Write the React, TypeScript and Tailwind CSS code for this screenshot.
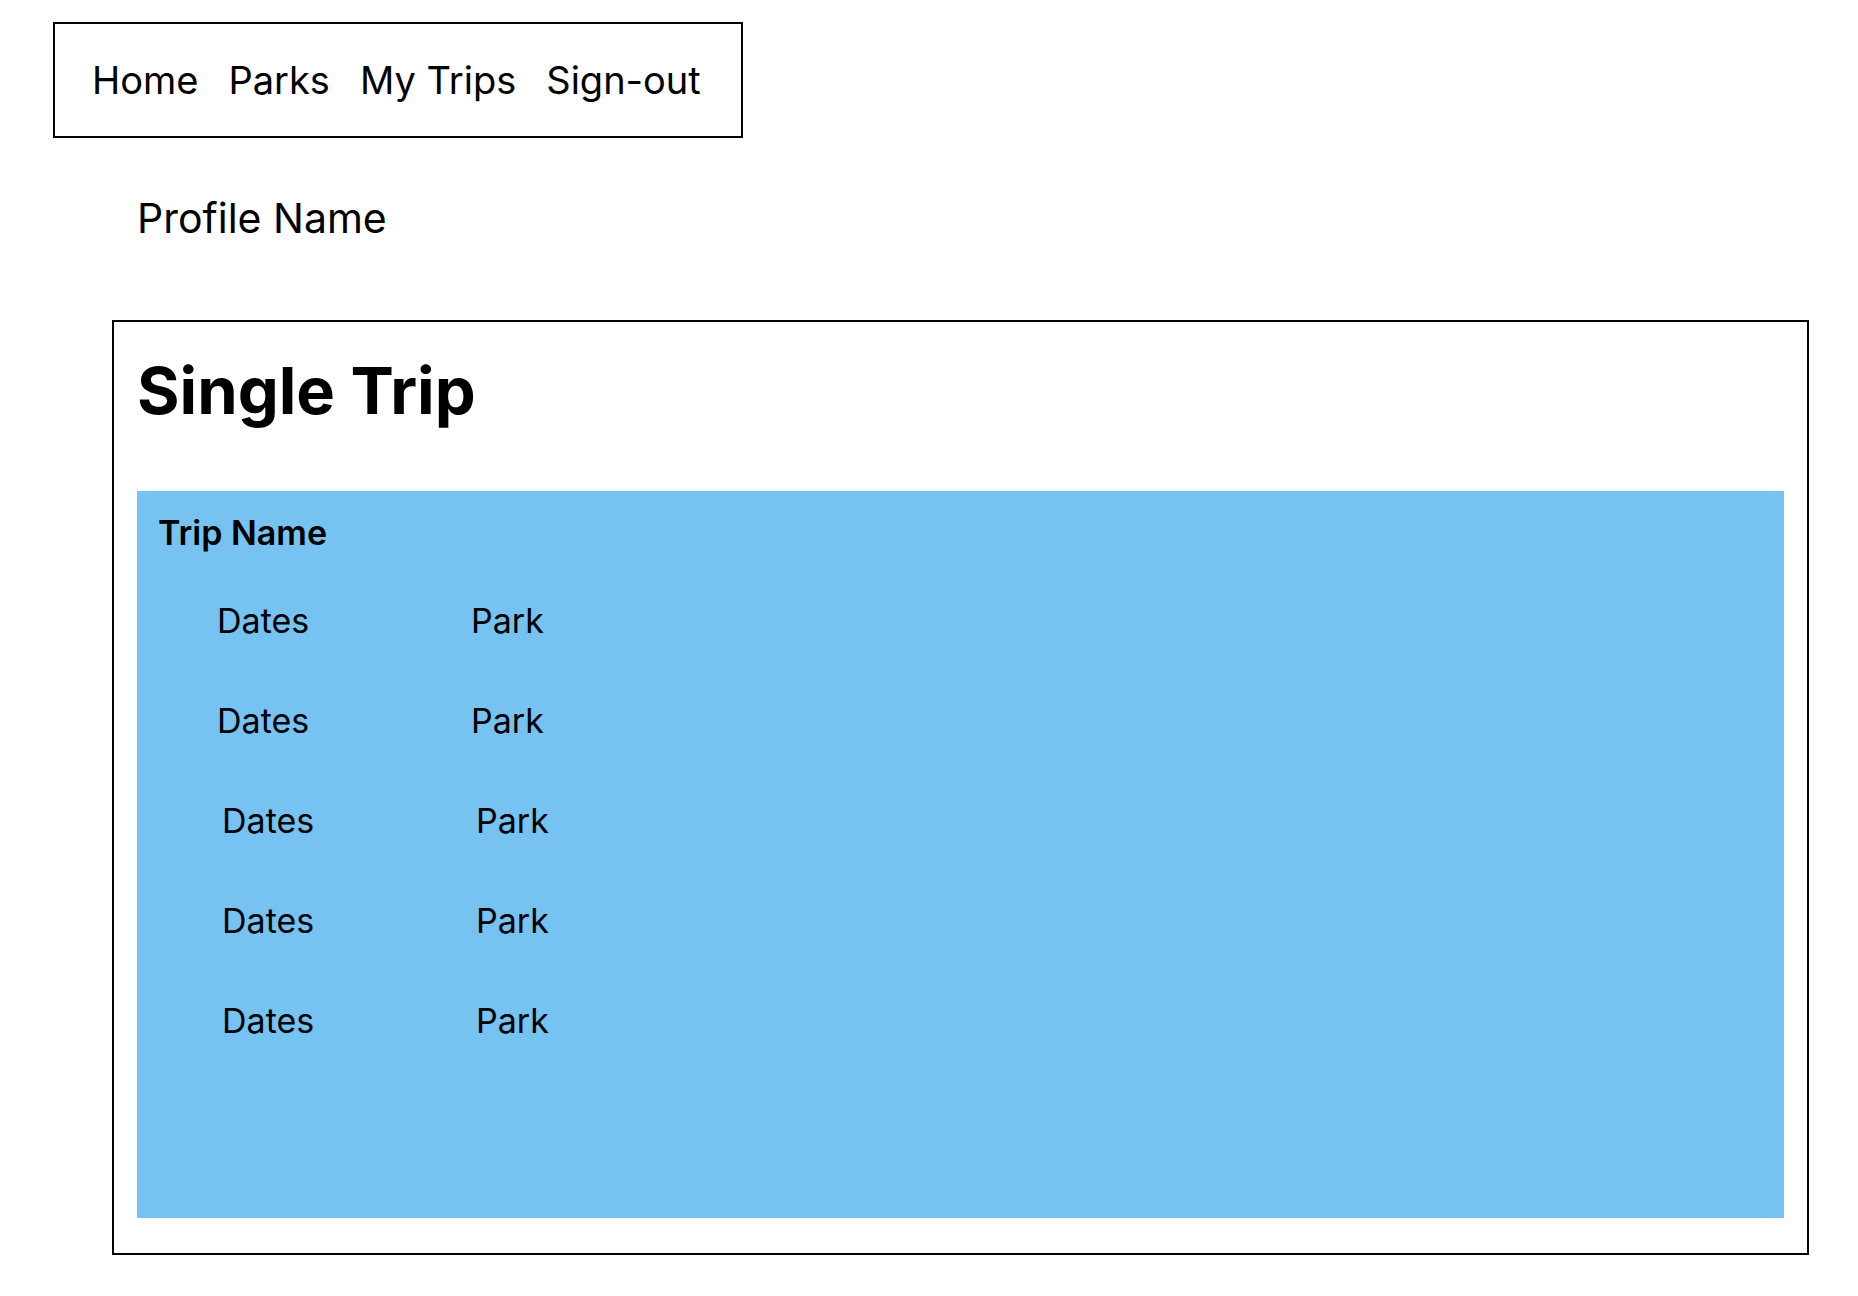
import React from 'react';

const navLinks = ['Home', 'Parks', 'My Trips', 'Sign-out'];

function TripRow({ shifted }: { shifted?: boolean }) {
	return (
		<div
			className={
				shifted
					? 'flex items-center h-[100px] pl-[85px] text-[34px]'
					: 'flex items-center h-[100px] pl-[80px] text-[34px]'
			}
		>
			<span className="w-[254px]">Dates</span>
			<span>Park</span>
		</div>
	);
}

export default function App() {
	return (
		<div className="min-h-screen bg-white text-black font-['Inter','Noto_Sans',sans-serif] pb-[40px]">
			{/* Nav */}
			<nav className="ml-[53px] mt-[22px] w-[690px] h-[116px] border-2 border-black flex items-center pl-[37px] gap-[30px] text-[38px]">
				{navLinks.map((link) => (
					<a key={link} href="#" className="leading-[46px]">
						{link}
					</a>
				))}
			</nav>

			<h2 className="ml-[137px] mt-[57px] text-[41px] leading-[46px]">
				Profile Name
			</h2>

			{/* Trip card */}
			<section className="ml-[112px] mr-[49px] mt-[79px] border-2 border-black px-[23px] pb-[35px]">
				<h1 className="pt-[29px] text-[65px] font-bold leading-[80px]">
					Single Trip
				</h1>

				<div className="mt-[60px] h-[727px] bg-[#76c2f0] pt-[22px]">
					<h3 className="pl-[21px] text-[34px] font-semibold leading-[40px]">
						Trip Name
					</h3>
					<div className="mt-[17px]">
						<TripRow />
						<TripRow />
						<TripRow shifted />
						<TripRow shifted />
						<TripRow shifted />
					</div>
				</div>
			</section>
		</div>
	);
}
